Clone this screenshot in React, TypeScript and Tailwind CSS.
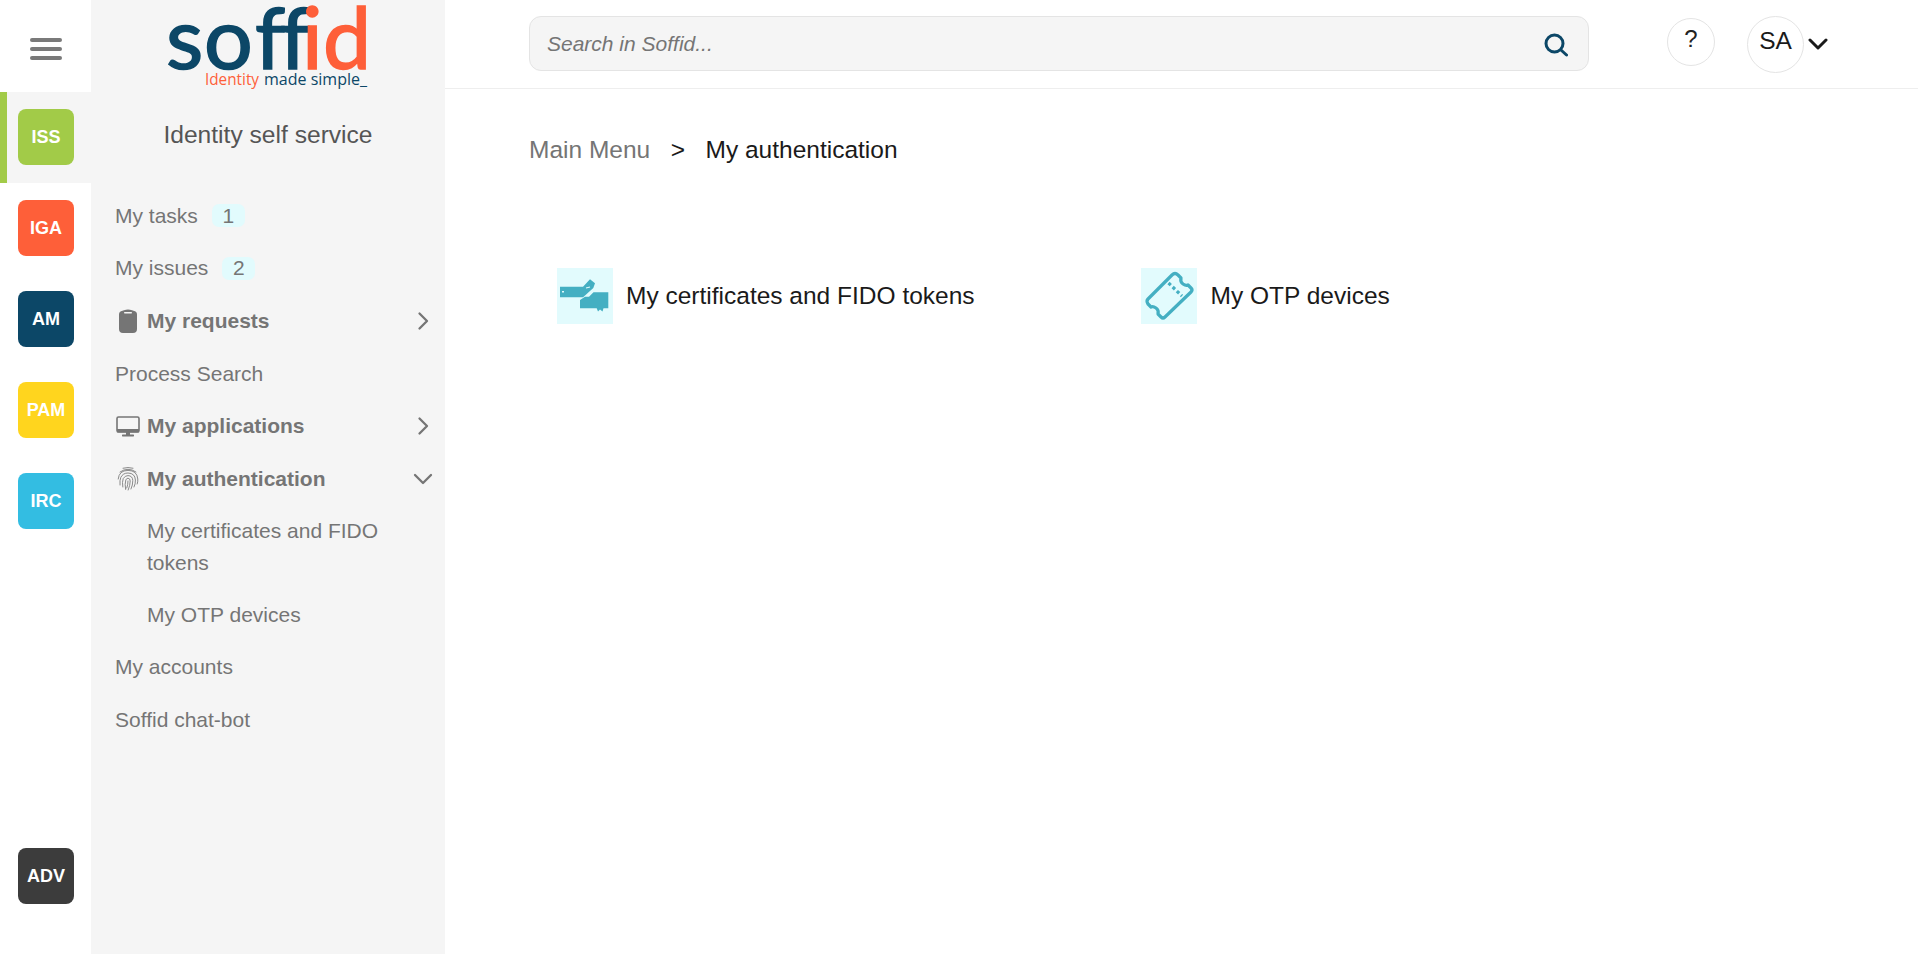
import React from "react";

const font = { fontFamily: '"Liberation Sans", Arial, sans-serif' };

function Tile({ label, color }: { label: string; color: string }) {
  return (
    <div className={`flex h-[56px] w-[56px] items-center justify-center rounded-[8px] text-[18px] font-bold text-white ${color}`}>
      {label}
    </div>
  );
}

function Logo() {
  return (
    <svg width="200" height="92" viewBox="0 0 200 92" className="block overflow-visible">
      <g style={{ fontFamily: "Lato, sans-serif" }} fontSize="86" strokeWidth="1.6">
        <text x="-2 36 87 112" y="69" fill="#0c4767" stroke="#0c4767">soff</text>
        <text x="134 155" y="69" fill="#fe5f39" stroke="#fe5f39">id</text>
      </g>
      <g style={{ fontFamily: '"Open Sans", sans-serif' }} fontSize="16">
        <text x="37" y="85" fill="#fe5f39" textLength="54" lengthAdjust="spacingAndGlyphs">Identity</text>
        <text x="96" y="85" fill="#0c4767" textLength="103" lengthAdjust="spacingAndGlyphs">made simple_</text>
      </g>
    </svg>
  );
}

function Clipboard() {
  return (
    <svg width="18" height="24" viewBox="0 0 18 24" className="ml-[4px]">
      <path d="M5 1.2 Q9 0 13 1.2 L14.5 1.8 Q18 2.5 18 5.5 V20 Q18 24 14 24 H4 Q0 24 0 20 V5.5 Q0 2.5 3.5 1.8 Z" fill="#757575" />
      <rect x="5" y="3" width="8" height="1.4" rx=".7" fill="#f5f5f5" />
    </svg>
  );
}

function Monitor() {
  return (
    <svg width="24" height="21" viewBox="0 0 24 21" className="ml-[1px]">
      <rect x="1" y="1" width="22" height="15" rx="1.5" fill="none" stroke="#757575" strokeWidth="1.6" />
      <rect x="1" y="13" width="22" height="3.4" fill="#757575" />
      <rect x="10" y="16" width="4" height="3" fill="#757575" />
      <rect x="6" y="18.4" width="12" height="2" rx=".6" fill="#757575" />
    </svg>
  );
}

function Fingerprint() {
  return (
    <svg width="22" height="24" viewBox="0 0 22 24" className="ml-[2px]" fill="none" stroke="#7d7d7d" strokeWidth=".9" strokeLinecap="round">
      <path d="M6 1.2 Q11 -.2 16 1.2" />
      <path d="M3 5 Q11 -.6 19 5" />
      <path d="M1.2 12 Q2 3.4 11 3.4 Q20 3.4 20.8 12 Q21 15 20.2 17" />
      <path d="M3 18 Q2.6 13 3.8 10.4 Q6 6 11 6 Q18 6.2 18.4 13 Q18.6 17 17 20" />
      <path d="M5.8 20 Q5 15 6.2 11.6 Q8 8.6 11 8.6 Q15.6 8.8 15.8 13.6 Q15.8 18 14 22" />
      <path d="M8.6 22.4 Q7.6 17 8.8 13 Q9.6 11.2 11 11.2 Q13.2 11.4 13.2 14 Q13.2 18 11.2 23" />
      <path d="M11 14 Q11 18 9.8 21" />
    </svg>
  );
}

function Chevron({ down }: { down?: boolean }) {
  return down ? (
    <svg width="20" height="12" viewBox="0 0 20 12" fill="none" stroke="#757575" strokeWidth="2.3" strokeLinecap="round" strokeLinejoin="round">
      <path d="M2 2 L10 10 L18 2" />
    </svg>
  ) : (
    <svg width="12" height="20" viewBox="0 0 12 20" fill="none" stroke="#757575" strokeWidth="2.3" strokeLinecap="round" strokeLinejoin="round">
      <path d="M2.5 2.5 L10 10 L2.5 17.5" />
    </svg>
  );
}

function Plain({ label, badge, indent }: { label: string; badge?: string; indent?: boolean }) {
  return (
    <div className={`flex items-center text-[21px] leading-[32px] text-[#757575] ${indent ? "py-[10px] pl-[32px] pr-[40px]" : "py-[10.3px]"}`}>
      <span>{label}</span>
      {badge && (
        <span className="ml-[14px] flex h-[23px] w-[33px] items-center justify-center rounded-[7px] bg-[#e2fbfd]">{badge}</span>
      )}
    </div>
  );
}

function Group({ label, icon, open }: { label: string; icon: React.ReactNode; open?: boolean }) {
  return (
    <div className="flex items-center py-[10.3px] text-[21px] font-bold leading-[32px] text-[#757575]">
      <span className="flex w-[32px] shrink-0 items-center">{icon}</span>
      <span className="flex-1">{label}</span>
      <span className="flex w-[24px] justify-center">
        <Chevron down={open} />
      </span>
    </div>
  );
}

function CertIcon() {
  return (
    <svg width="56" height="56" viewBox="0 0 56 56" className="block bg-[#e2fbfd]">
      <path d="M3 18.7 H26 L33 11.3 L38 15.3 L36.3 20 L28 27.5 L26 29.3 H3 Z" fill="#44afc2" />
      <path d="M36.5 24.3 H51.3 V40.3 H46.5 L45.5 43.5 L43 41.5 L41 43.5 L39.7 40.3 H23 V32 L28 28.7 H32 Z" fill="#44afc2" />
      <rect x="5" y="23" width="2" height="1.5" fill="#e2fbfd" />
      <path d="M29 20 L33 19" stroke="#e2fbfd" strokeWidth="1.2" />
    </svg>
  );
}

function TicketIcon() {
  return (
    <svg width="56" height="56" viewBox="0 0 56 56" className="block bg-[#e2fbfd]" fill="none" stroke="#44afc2" strokeWidth="3.2" strokeLinejoin="round">
      <path strokeLinecap="round" d="M31 7 Q34 4 37 7 L40 10 Q39 14 42 16 Q45 18 47 17 L50 20 Q52 22 50 24 L24 49 Q22 51 20 49 L17 46 Q18 42 15 40 Q12 38 10 39 L7 36 Q5 33 7 31 Z" />
      <path d="M27.5 15 L41 28" strokeDasharray="3.2 2.6" />
    </svg>
  );
}

export default function App() {
  return (
    <div className="flex h-[954px] w-[1918px] overflow-hidden bg-white" style={font}>
      <aside className="flex w-[91px] shrink-0 flex-col pb-[50px]">
        <div className="flex h-[92px] items-center justify-center pt-[6px]">
          <div className="flex w-[32px] flex-col gap-[4.7px]">
            <span className="h-[4px] rounded-full bg-[#7a7a7a]" />
            <span className="h-[4px] rounded-full bg-[#7a7a7a]" />
            <span className="h-[4px] rounded-full bg-[#7a7a7a]" />
          </div>
        </div>
        <div className="h-[91px] border-l-[7px] border-[#a2cb48] bg-[#f5f5f5] pl-[11px] pt-[17px]">
          <Tile label="ISS" color="bg-[#a2cb48]" />
        </div>
        <div className="h-[91px] pl-[18px] pt-[17px]"><Tile label="IGA" color="bg-[#fe5f39]" /></div>
        <div className="h-[91px] pl-[18px] pt-[17px]"><Tile label="AM" color="bg-[#0c4767]" /></div>
        <div className="h-[91px] pl-[18px] pt-[17px]"><Tile label="PAM" color="bg-[#ffd51e]" /></div>
        <div className="h-[91px] pl-[18px] pt-[17px]"><Tile label="IRC" color="bg-[#33bde2]" /></div>
        <div className="mt-auto pl-[18px]"><Tile label="ADV" color="bg-[#3c3c3c]" /></div>
      </aside>

      <nav className="flex w-[354px] shrink-0 flex-col bg-[#f5f5f5]">
        <div className="flex h-[92px] justify-center">
          <Logo />
        </div>
        <div className="mt-[26px] text-center text-[24.6px] leading-[34px] text-[#555555]">Identity self service</div>
        <div className="mt-[37.5px] pl-[24px] pr-[10px]">
          <Plain label="My tasks" badge="1" />
          <Plain label="My issues" badge="2" />
          <Group label="My requests" icon={<Clipboard />} />
          <Plain label="Process Search" />
          <Group label="My applications" icon={<Monitor />} />
          <Group label="My authentication" icon={<Fingerprint />} open />
          <Plain label="My certificates and FIDO tokens" indent />
          <Plain label="My OTP devices" indent />
          <Plain label="My accounts" />
          <Plain label="Soffid chat-bot" />
        </div>
      </nav>

      <main className="flex min-w-0 flex-1 flex-col">
        <header className="flex h-[89px] shrink-0 items-start border-b border-[#eeeeee] pl-[84px]">
          <div className="mt-[16px] flex h-[55px] w-[1060px] items-center justify-between rounded-[12px] border border-[#e4e4e4] bg-[#f5f5f5] pl-[17px] pr-[20px]">
            <span className="text-[21px] italic text-[#757575]">Search in Soffid...</span>
            <svg width="26" height="26" viewBox="0 0 26 26" fill="none" stroke="#0c4767" strokeWidth="3" strokeLinecap="round">
              <circle cx="12.5" cy="12.5" r="8.5" />
              <path d="M19 19 L24.5 24" />
            </svg>
          </div>
          <div className="ml-[78px] mt-[18px] flex h-[48px] w-[48px] items-center justify-center rounded-full border border-[#e4e4e4] pb-[6px] text-[24px] text-[#222222]">?</div>
          <div className="ml-[32px] mt-[16px] flex h-[57px] w-[57px] items-center justify-center rounded-full border border-[#e4e4e4] pb-[6px] text-[24.5px] text-[#1a1a1a]">SA</div>
          <svg className="ml-[4px] mt-[37px]" width="20" height="14" viewBox="0 0 20 14" fill="none" stroke="#1a1a1a" strokeWidth="3" strokeLinecap="round" strokeLinejoin="round">
            <path d="M2 3 L10 11 L18 3" />
          </svg>
        </header>
        <div className="flex items-center pl-[84px] pt-[43px] text-[24.5px] leading-[36px]">
          <span className="text-[#757575]">Main Menu</span>
          <span className="ml-[20.5px] text-[#1a1a1a]">&gt;</span>
          <span className="ml-[20.5px] text-[#1a1a1a]">My authentication</span>
        </div>
        <div className="mt-[100px] grid grid-cols-[584px_582px] pl-[112px] text-[24.5px] text-[#1a1a1a]">
          <div className="flex items-center gap-[13px]"><CertIcon /><span>My certificates and FIDO tokens</span></div>
          <div className="flex items-center gap-[13.5px]"><TicketIcon /><span>My OTP devices</span></div>
        </div>
      </main>
    </div>
  );
}
